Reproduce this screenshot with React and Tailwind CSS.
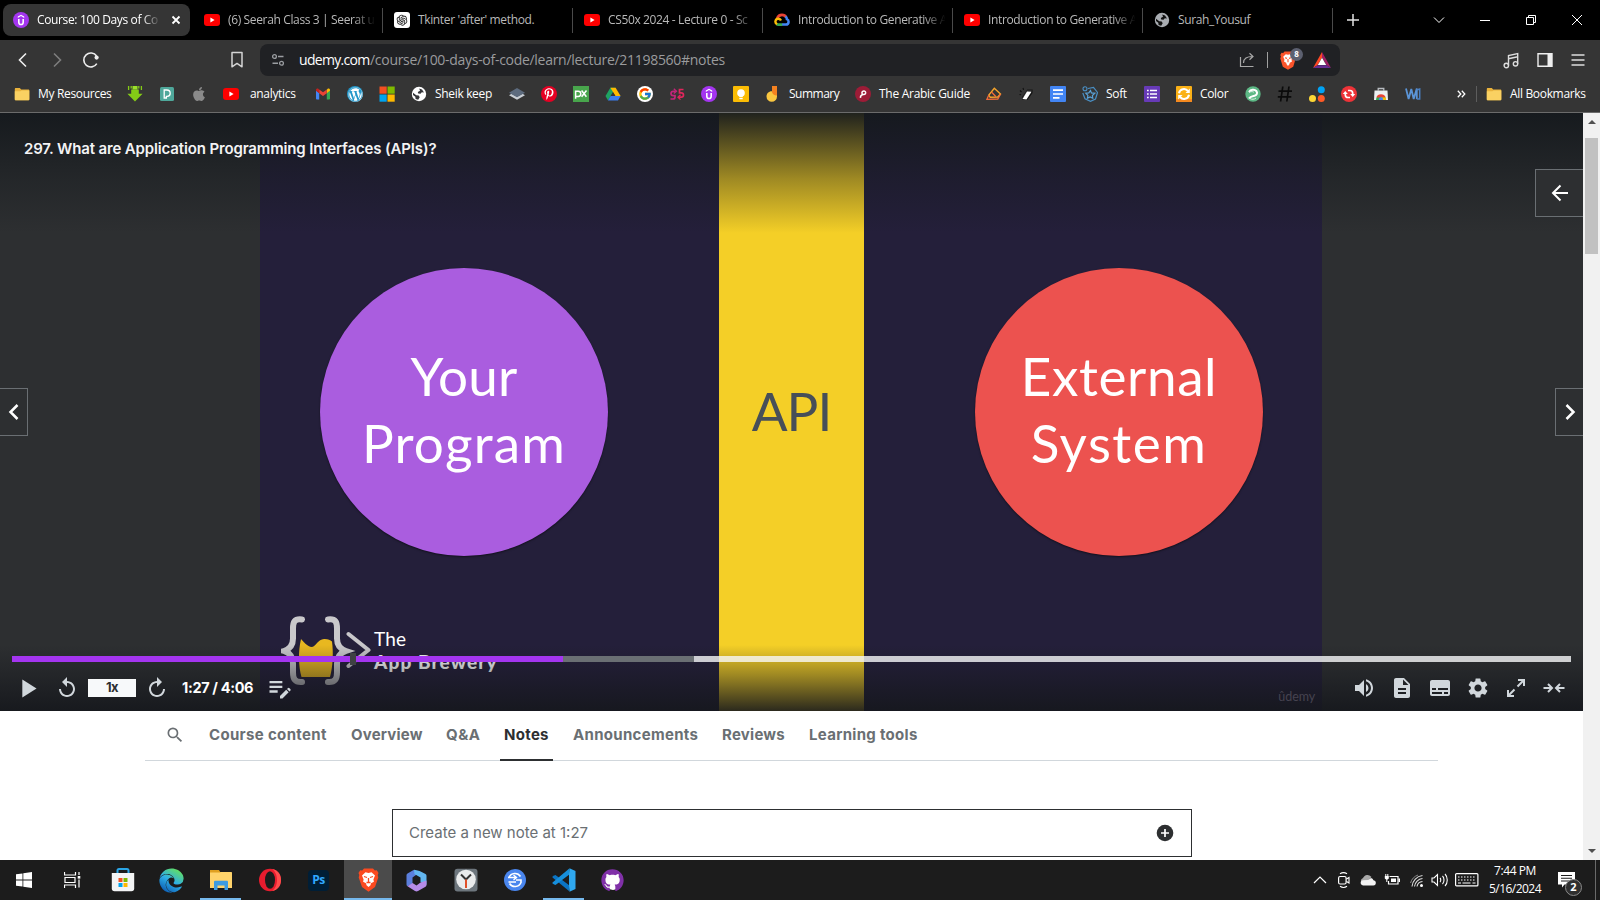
import React from "react";
import {
  MdReplay, MdPlayArrow, MdEditNote, MdVolumeUp, MdDescription, MdSubtitles, MdSettings, MdSearch,
} from "react-icons/md";
import { FaApple, FaWordpress, FaEdge, FaGithub, FaPinterestP } from "react-icons/fa";
import { FcGoogle } from "react-icons/fc";
import { AiOutlineOpenAI } from "react-icons/ai";

/* ---------- small brand marks (16px) ---------- */

const Svg = ({ s = 16, vb = "0 0 16 16", className = "", children }) => (
  <svg width={s} height={s} viewBox={vb} fill="none" className={"shrink-0 " + className}>{children}</svg>
);

const UdemyIcon = () => (
  <Svg>
    <circle cx="8" cy="8" r="8" fill="#a435f0" />
    <path d="M4.800 4.600 8 2.800l3.200 1.800v1.300L8 4.100 4.800 5.900Z" fill="#fff" />
    <path d="M5.800 7v3.200c0 1.400.9 2.300 2.200 2.300s2.200-.9 2.200-2.300V7" stroke="#fff" strokeWidth="1.600" />
  </Svg>
);
const YoutubeIcon = () => (
  <Svg>
    <rect x="0" y="2" width="16" height="12" rx="3" fill="#f00" />
    <path d="M6.400 5.500v5L10.600 8Z" fill="#fff" />
  </Svg>
);
const OpenAiIcon = () => (
  <span className="flex h-4 w-4 shrink-0 items-center justify-center rounded-[3px] bg-white">
    <AiOutlineOpenAI size={14} color="#222" />
  </span>
);
const CloudIcon = () => (
  <Svg>
    <path d="M3.200 6.200C4 4 5.800 2.800 8 2.800c1.900 0 3.300.8 4.100 2.300" stroke="#ea4335" strokeWidth="2.700" />
    <path d="M11.400 4.600c1 .7 1.500 1.700 1.500 2.600 1 .4 1.700 1.400 1.700 2.500 0 1.700-1.200 2.900-2.800 2.900H8" stroke="#4285f4" strokeWidth="2.500" />
    <path d="M8.200 12.600H4.400c-.8 0-1.400-.3-1.900-.7" stroke="#34a853" strokeWidth="2.600" />
    <path d="M3 12.200C1.700 11.400 1.200 10.300 1.500 9c.4-1.500 1.500-2.300 3-2.200 1.200.1 2 .7 2.500 1.700" stroke="#fbbc05" strokeWidth="2.400" />
  </Svg>
);
const GlobeIcon = ({ bg = "#fff", fg = "#35363a" }) => (
  <Svg>
    <circle cx="8" cy="8" r="7.200" fill={bg} />
    <path d="M8.200 2.500 11 3.600l2 2.900-2.200-.2-1.300 1.500-2.300-.3-.4-1.600L9 4.800Z" fill={fg} />
    <path d="M2 6.800l3.300 2.400 2.400.4 1 1.600-1.500 2.500L4.600 13l-.3-2.300L2 9Z" fill={fg} />
  </Svg>
);
const FolderIcon = () => (
  <Svg>
    <path d="M.8 3.200c0-.7.4-1.100 1-1.100h4l1.400 1.400h7c.7 0 1.100.4 1.100 1v8.700c0 .6-.4 1-1.100 1H1.800c-.6 0-1-.4-1-1Z" fill="#e9b23c" />
    <path d="M.8 5.300h5.600l1.200-.9h7.700v8.800c0 .6-.4 1-1.100 1H1.800c-.6 0-1-.4-1-1Z" fill="#fad162" />
  </Svg>
);
const DownIcon = () => (
  <Svg>
    <path d="M4.200 3.400h7.600v4.300H15.600L8 15.600.4 7.700h3.800Z" fill="#84cc16" />
    <path d="M1.600 0v4M14.400 0v4M4.200 0v2.500M11.800 0v2.500" stroke="#84cc16" strokeWidth="1.300" />
    <path d="M5.500 0h5v3.500h-5Z" fill="#9be02a" />
  </Svg>
);
const DIcon = () => (
  <Svg>
    <rect x="1" y="1" width="14" height="14" rx="1.500" fill="#4fa89b" />
    <path d="M5.200 12V4h2.600c2.100 0 3.400 1.200 3.400 3.200S9.900 10.300 8.200 10.300H7.400V12Z" stroke="#fff" strokeWidth="1.300" />
  </Svg>
);
const GmailIcon = () => (
  <Svg>
    <path d="M1 4.500v8.200c0 .5.400.8.8.8h2.400V7Z" fill="#4285f4" />
    <path d="M15 4.500v8.200c0 .5-.4.8-.8.8h-2.400V7Z" fill="#34a853" />
    <path d="M11.800 3.800V7.200L15 4.800V3.900c0-1.300-1.400-1.900-2.300-1.200Z" fill="#fbbc04" />
    <path d="M4.200 7.200V3.400L8 6.300l3.800-2.900v3.800L8 10.100Z" fill="#ea4335" />
    <path d="M1 3.900v.9l3.200 2.400V3.800l-.9-1.100C2.400 2 1 2.600 1 3.900Z" fill="#c5221f" />
  </Svg>
);
const WpIcon = () => (
  <span className="flex h-4 w-4 shrink-0 items-center justify-center rounded-full bg-[#2196c9]">
    <FaWordpress size={15} color="#fff" />
  </span>
);
const MsIcon = () => (
  <Svg>
    <path d="M.5.500h7.200v7.200H.5Z" fill="#f25022" />
    <path d="M8.500.5h7.200v7.200H8.500Z" fill="#7fba00" />
    <path d="M.5 8.500h7.200v7.200H.5Z" fill="#00a4ef" />
    <path d="M8.500 8.500h7.200v7.200H8.500Z" fill="#ffb900" />
  </Svg>
);
const StackIcon = () => (
  <Svg>
    <path d="M0 9.200 8 13.800l8-4.600-2.500-1.500L8 10.800 2.500 7.700Z" fill="#c9ced4" />
    <path d="M8 2 0 6.700l8 4.600 8-4.600Z" fill="#5d6b7e" />
  </Svg>
);
const PinIcon = () => (
  <span className="flex h-4 w-4 shrink-0 items-center justify-center rounded-full bg-[#e60023]">
    <FaPinterestP size={12} color="#fff" />
  </span>
);
const PxIcon = () => (
  <Svg>
    <path d="M0 0h16v16H0Z" fill="#48a54c" />
    <path d="M2.600 12.800V5.200h2.600a2.400 2.400 0 0 1 0 5.200H2.600M8.600 4.500l4.800 6.300M13.500 4.500 8.600 10.800" stroke="#fff" strokeWidth="1.500" />
  </Svg>
);
const DriveIcon = () => (
  <Svg>
    <path d="M5.400 1.700h5.200L5.700 10 3 14.400.5 10.100Z" fill="#1ea362" />
    <path d="M5.400 1.700h5.200l5 8.400h-5.200Z" fill="#ffba00" />
    <path d="M5.600 10.100h10L13 14.400H3Z" fill="#3b7ded" />
    <path d="M8 6.200 5.700 10.100h4.700Z" fill="#353535" />
  </Svg>
);
const GIcon = () => (
  <span className="flex h-4 w-4 shrink-0 items-center justify-center rounded-full bg-white">
    <FcGoogle size={14} />
  </span>
);
const SIcon = () => (
  <Svg>
    <path d="M6.500 5.300H4.200A2.300 2.300 0 0 0 2 7.500c0 1.300.9 2.200 2.200 2.200H6V11c0 1.300-.8 2-2 2H1.500" stroke="#c2257a" strokeWidth="1.700" />
    <path d="M4.800 2.800 7.500 5.300 4.800 7.600" stroke="#c2257a" strokeWidth="1.300" />
    <path d="M14.500 3.500h-4v3.400h1.700c1.400 0 2.300.8 2.300 2.100s-.9 2.200-2.300 2.200H9.500" stroke="#e0265c" strokeWidth="1.700" />
    <path d="M11.500 8.800 9 11.200l2.500 2.400" stroke="#e0265c" strokeWidth="1.300" />
  </Svg>
);
const KeepIcon = () => (
  <Svg>
    <rect width="16" height="16" rx="1" fill="#fbbc04" />
    <circle cx="8" cy="7" r="3.800" fill="#fff" />
    <path d="M6.300 9.500h3.400v1.700H6.300ZM6.300 12h3.400v1.300H6.300Z" fill="#fff" />
  </Svg>
);
const HandIcon = () => (
  <Svg>
    <path d="M1.500 10.500C1.500 7.500 3.800 5 7 5.200L12 5v5.500A5.200 5.200 0 0 1 1.500 10.500Z" fill="#fbc740" />
    <path d="M7 0h5v9.500c-2.500 0-5-1.500-5-4Z" fill="#f58220" />
  </Svg>
);
const ArabicIcon = () => (
  <Svg>
    <circle cx="8" cy="8" r="8" fill="#9d1c37" />
    <path d="M10.800 6.800C10.600 5.200 9 4.400 7.700 5.300c-1.200.9-1 2.700.3 3.200 1 .3 2-.2 3-1.200M8 8.500c-1.800.4-2.700 1.400-2.500 3.300" stroke="#fff" strokeWidth="1.500" />
  </Svg>
);
const DiamondIcon = () => (
  <Svg>
    <path d="M8.300 2.200 14.500 8l-2.700 3-7.600.3L2.800 9Z" stroke="#f7a52b" strokeWidth="1.400" />
    <path d="M2.800 9 .9 13.300l10.900-.3 2.700-5M5.500 6l4.500 4.800" stroke="#f26b3a" strokeWidth="1.300" />
  </Svg>
);
const EraserIcon = () => (
  <Svg>
    <path d="M9.500 3.500h5v3.500L9.500 14h-5v-3.500Z" fill="#111" />
    <path d="M9.500 3.500h5l-5 7.500h-5Z" fill="#2a2a2a" />
    <path d="m9 5.500 4.500.3-5 7.700-4-.5Z" fill="#fff" />
    <path d="M2 4.500 3.500 6M5 2l.6 1.800M1.500 8.500l1.600.3" stroke="#111" strokeWidth="1.100" />
  </Svg>
);
const DocsIcon = () => (
  <Svg>
    <rect width="16" height="16" rx="1" fill="#4285f4" />
    <path d="M3 4.200h10M3 8h10M3 11.800h6.500" stroke="#fff" strokeWidth="1.700" />
  </Svg>
);
const SoftIcon = () => (
  <Svg>
    <circle cx="3" cy="2.800" r="2" stroke="#4a8fc4" strokeWidth="1.100" />
    <path d="M6 2.500 11.500 1.500l4 5-2 6.500-5 2.300-5.500-2.500L.8 7" stroke="#4a8fc4" strokeWidth="1.200" />
    <path d="m8.500 4.500.9 2.400 3.400.4-2.400 2.200.4 2.800-2.700-1.300-2.700 1.300.5-2.900L3.800 7.200l3-.3Z" stroke="#5aa2d8" strokeWidth="1.200" />
  </Svg>
);
const FormsIcon = () => (
  <Svg>
    <rect width="16" height="16" rx="1" fill="#673ab7" />
    <path d="M6 4.500h7M6 8h7M6 11.500h7" stroke="#fff" strokeWidth="1.600" />
    <path d="M3 4.500h1.700M3 8h1.700M3 11.500h1.700" stroke="#fff" strokeWidth="1.600" />
  </Svg>
);
const ColorIcon = () => (
  <Svg>
    <rect width="16" height="16" rx="1" fill="#fbb117" />
    <path d="M0 13h16v3H0Z" fill="#f58a1f" />
    <path d="M3 7.200a5 5 0 0 1 9-2M13 8.800a5 5 0 0 1-9 2" stroke="#fff" strokeWidth="2" />
    <path d="M13.800 2.500V7H9.500ZM2.200 13.500V9h4.300Z" fill="#fff" />
  </Svg>
);
const GreenIcon = () => (
  <Svg>
    <circle cx="8" cy="8" r="7.700" fill="#5db885" />
    <path d="M4 6c1.500-2.500 5.500-3 7.300-1 1.600 1.900.5 4.200-1.700 4.700-2 .5-4.300.5-5.600 2.800" stroke="#fff" strokeWidth="2" />
    <path d="M4 6.500c2-1.400 4.500-1 5 0M5 12.500c1.500 1.200 4.500 1 6-.5" stroke="#d9f0e2" strokeWidth="1" />
  </Svg>
);
const HashIcon = () => (
  <Svg>
    <path d="M5.800.5 3.600 15.500M12 .5 9.800 15.500M1.500 5.200h13.500M.8 10.800h13.500" stroke="#0b0b0b" strokeWidth="1.700" />
  </Svg>
);
const DotsIcon = () => (
  <Svg>
    <circle cx="12.300" cy="3.700" r="3.500" fill="#00a3f5" />
    <circle cx="3.500" cy="12.500" r="3.500" fill="#fdd835" />
    <circle cx="12.300" cy="12.500" r="3.500" fill="#ff5a26" />
  </Svg>
);
const RedIcon = () => (
  <Svg>
    <circle cx="8" cy="8" r="8" fill="#ee3338" />
    <path d="M7 4.500h2c1.700 0 2.700 1 2.700 2.700v1.500M9 11.500H7c-1.700 0-2.700-1-2.700-2.700V7.300" stroke="#fff" strokeWidth="1.700" />
    <path d="M9.200 8h5l-2.500 3ZM6.800 8h-5l2.500-3Z" fill="#fff" />
  </Svg>
);
const StoreIcon = () => (
  <Svg>
    <path d="M5.200 4.500v-2h5.600v2" stroke="#b8bcc0" strokeWidth="1.300" />
    <path d="M1.500 4.500h13l.5 9.500H1Z" fill="#eceff1" />
    <path d="M3 14a5 5 0 0 1 10 0Z" fill="#34a853" />
    <path d="M3.300 11.500A5 5 0 0 1 12.700 11.500H8Z" fill="#ea4335" />
    <path d="M8 11.500h4.700c.2.700.3 1.600.3 2.500H9Z" fill="#fbbc05" />
    <circle cx="8" cy="13.300" r="2" fill="#4285f4" />
    <path d="M1 14h14v2H1Z" fill="#353535" />
  </Svg>
);
const WaIcon = () => (
  <Svg>
    <path d="m1 2.500 2.600 10.500L6.300 3l2.400 10L11.800 2.500V13" stroke="#5b94d6" strokeWidth="1.800" strokeLinejoin="bevel" />
    <path d="M11.500 4 14.700 3v10h-3" stroke="#4a7fc0" strokeWidth="1.500" />
  </Svg>
);

/* ---------- browser chrome ---------- */

const tabs = [
  { t: "(6) Seerah Class 3 | Seerat u", i: <YoutubeIcon />, f: true },
  { t: "Tkinter 'after' method.", i: <OpenAiIcon /> },
  { t: "CS50x 2024 - Lecture 0 - Sc", i: <YoutubeIcon />, f: true },
  { t: "Introduction to Generative A", i: <CloudIcon />, f: true },
  { t: "Introduction to Generative A", i: <YoutubeIcon />, f: true },
  { t: "Surah_Yousuf", i: <GlobeIcon bg="#a9adb2" fg="#111" /> },
];

const fade = "[mask-image:linear-gradient(to_right,#000_84%,transparent_99%)]";

function TabStrip() {
  return (
    <div className="flex h-10 bg-black text-[12px] tracking-[-0.36px]">
      <div className="mt-1 ml-[3px] flex h-8 w-[187px] items-center rounded-lg bg-[#353535] pl-[10px]">
        <UdemyIcon />
        <span className={"ml-2 w-[125px] whitespace-nowrap text-white " + fade}>Course: 100 Days of Co</span>
        <svg width="10" height="10" viewBox="0 0 10 10" className="ml-[9px]"><path d="m1.500 1.500 7 7M8.500 1.500l-7 7" stroke="#fff" strokeWidth="1.800" /></svg>
      </div>
      <div className="ml-[3px] flex">
        {tabs.map((tab, k) => (
          <div key={k} className="flex w-[190px] items-center pl-[11px]">
            {tab.i}
            <span className={"ml-2 w-[149px] whitespace-nowrap text-[#b9b9b9] " + (tab.f ? fade : "")}>{tab.t}</span>
            <span className="ml-auto h-[25px] w-px bg-[#4a4a4a]" />
          </div>
        ))}
      </div>
      <svg width="12" height="12" viewBox="0 0 12 12" className="mt-[14px] ml-[14px]"><path d="M6 0v12M0 6h12" stroke="#e4e4e4" strokeWidth="1.500" /></svg>
      <div className="mt-[14px] ml-auto flex pr-[17px]">
        <svg width="12" height="12" viewBox="0 0 12 12" fill="none" className="mr-[34px]"><path d="m1 3.500 5 5 5-5" stroke="#fff" /></svg>
        <svg width="12" height="12" viewBox="0 0 12 12" className="mr-[34px]"><path d="M1 6.500h10" stroke="#fff" /></svg>
        <svg width="12" height="12" viewBox="0 0 12 12" fill="none" className="mr-[34px]"><path d="M1.500 3.500h7v7h-7ZM3.500 3.500v-2h7v7h-2" stroke="#fff" /></svg>
        <svg width="12" height="12" viewBox="0 0 12 12"><path d="m1 1 10 10M11 1 1 11" stroke="#fff" /></svg>
      </div>
    </div>
  );
}

function Toolbar() {
  return (
    <div className="flex h-10 items-center">
      <Svg s={18} vb="0 0 18 18" className="ml-[14px]"><path d="m12 2.500-6.500 6.500 6.500 6.500" stroke="#eee" strokeWidth="1.600" /></Svg>
      <Svg s={18} vb="0 0 18 18" className="ml-4"><path d="m6 2.500 6.500 6.500L6 15.500" stroke="#7d7d7d" strokeWidth="1.600" /></Svg>
      <Svg s={18} vb="0 0 18 18" className="ml-4"><path d="M14.800 12.600A7 7 0 1 1 14.600 5" stroke="#eee" strokeWidth="1.600" /><circle cx="14.600" cy="6.600" r="2.100" fill="#eee" /></Svg>
      <Svg s={18} vb="0 0 18 18" className="ml-[128px]"><path d="M4 1.500h10v14.300l-5-3.400-5 3.400Z" stroke="#d5d5d5" strokeWidth="1.500" strokeLinejoin="round" /></Svg>
      <div className="ml-[14px] flex h-8 w-[1080px] items-center rounded-lg bg-[#202124] pl-[11px]">
        <Svg s={14} vb="0 0 14 14"><circle cx="3.500" cy="3.500" r="1.900" stroke="#9a9da1" strokeWidth="1.300" /><circle cx="10.500" cy="10.300" r="1.900" stroke="#9a9da1" strokeWidth="1.300" /><path d="M7 3.500h5.500M1.500 10.300H7" stroke="#9a9da1" strokeWidth="1.400" /></Svg>
        <div className="ml-[14px] flex pb-px text-[14px] whitespace-nowrap">
          <span className="w-[71px] tracking-[-0.69px] text-white">udemy.com</span>
          <span className="tracking-[-0.29px] text-[#9a9b9d]">/course/100-days-of-code/learn/lecture/21198560#notes</span>
        </div>
        <div className="ml-auto flex items-center pr-[9px]">
          <Svg s={16}><path d="M1.500 5v9.500h13M4.500 11C4.500 6.500 8 4.500 13.500 4.500M10.500 1.200 14 4.500l-3.500 3.300" stroke="#a8a8a8" strokeWidth="1.200" /></Svg>
          <span className="ml-3 h-4 w-px bg-[#a0a0a0]" />
          <div className="relative ml-3 flex">
            <svg width="16" height="19" viewBox="0 0 16 19">
              <path d="M4.500.5h7l1.300 1.400 1.700-.1L15.700 4l-.6 1.500.6 2-2.500 8.300L8 18.800l-5.200-3L.3 7.500l.6-2L.3 4l1.200-2.200 1.700.1Z" fill="#fb542b" />
              <path d="m8 3.800 2.200-.6 2.600 2.500-1.300 3 .5 1.800-2.200 1.200-.4 1.500L8 15l-1.400-1.800-.4-1.500L4 10.500l.5-1.800-1.300-3 2.600-2.500Z" fill="#fff" />
              <path d="m5 6.800 2 .6M11 6.800l-2 .6M8 8v3.200" stroke="#fb542b" strokeWidth="1.100" />
            </svg>
            <span className="absolute top-[-3px] left-[10px] flex h-[13px] w-[13px] items-center justify-center rounded-full bg-[#5c6070] text-[8px] font-bold text-white">8</span>
          </div>
          <svg width="18" height="16" viewBox="0 0 18 16" className="ml-[17px]">
            <path d="M9 0 0 16 4.500 13.300 9 5.500Z" fill="#ff4724" /><path d="m9 0 9 16-4.500-2.700L9 5.500Z" fill="#9e1f63" /><path d="M0 16h18l-4.500-2.700h-9Z" fill="#662d91" /><path d="m9 5.800 4.200 7.300H4.800Z" fill="#fff" />
          </svg>
        </div>
      </div>
      <div className="ml-auto flex items-center pr-[15px]">
        <Svg s={17} vb="0 0 17 17" className="mr-[17px]"><circle cx="3.300" cy="13.500" r="2.200" stroke="#ddd" strokeWidth="1.400" /><circle cx="12.500" cy="11.800" r="2.200" stroke="#ddd" strokeWidth="1.400" /><path d="M5.500 13.500V3.500L14.700 1.500v10.300M5.500 6.800l9.200-2" stroke="#ddd" strokeWidth="1.400" /></Svg>
        <Svg s={16} className="mr-[18px]"><path d="M1 1.700h14v12.600H1Z" stroke="#eee" strokeWidth="1.400" /><path d="M10.500 1.500H15v13h-4.500Z" fill="#eee" /></Svg>
        <Svg s={14} vb="0 0 14 14"><path d="M.5 2h13M.5 7h13M.5 12h13" stroke="#ddd" strokeWidth="1.300" /></Svg>
      </div>
    </div>
  );
}

const Lbl = ({ className, children }) => (
  <span className={"whitespace-nowrap text-white " + className}>{children}</span>
);

function Bookmarks() {
  return (
    <div className="flex h-8 items-center gap-4 pb-1 pl-[14px] text-[12px] tracking-[-0.33px]">
      <div className="flex items-center"><FolderIcon /><Lbl className="ml-2 w-[73px]">My Resources</Lbl></div>
      <DownIcon />
      <DIcon />
      <FaApple size={16} color="#8a8a8a" className="shrink-0" />
      <div className="flex items-center"><YoutubeIcon /><Lbl className="ml-[11px] w-[49px]">analytics</Lbl></div>
      <GmailIcon />
      <WpIcon />
      <MsIcon />
      <div className="flex items-center"><GlobeIcon /><Lbl className="ml-2 w-[58px]">Sheik keep</Lbl></div>
      <StackIcon />
      <PinIcon />
      <PxIcon />
      <DriveIcon />
      <GIcon />
      <SIcon />
      <UdemyIcon />
      <KeepIcon />
      <div className="flex items-center"><HandIcon /><Lbl className="ml-2 w-[50px] tracking-[-0.5px]">Summary</Lbl></div>
      <div className="flex items-center"><ArabicIcon /><Lbl className="ml-2 w-[91px] tracking-[-0.28px]">The Arabic Guide</Lbl></div>
      <DiamondIcon />
      <EraserIcon />
      <DocsIcon />
      <div className="flex items-center"><SoftIcon /><Lbl className="ml-2 w-[22px]">Soft</Lbl></div>
      <FormsIcon />
      <div className="flex items-center"><ColorIcon /><Lbl className="ml-2 w-[29px]">Color</Lbl></div>
      <GreenIcon />
      <HashIcon />
      <DotsIcon />
      <RedIcon />
      <StoreIcon />
      <WaIcon />
      <div className="ml-auto flex items-center pr-[15px]">
        <svg width="9" height="8" viewBox="0 0 9 8" fill="none"><path d="m.8.8 3 3.200-3 3.200M4.800.8l3 3.200-3 3.200" stroke="#fff" strokeWidth="1.300" /></svg>
        <span className="mr-[9px] ml-[10px] h-4 w-px bg-[#5d5d5d]" />
        <FolderIcon />
        <Lbl className="ml-2 w-[75px]">All Bookmarks</Lbl>
      </div>
    </div>
  );
}

/* ---------- lecture video ---------- */

function BreweryLogo() {
  return (
    <div className="absolute top-[503px] left-[21px] flex text-white">
      <svg width="90" height="70" viewBox="0 0 90 70" fill="none">
        <path d="M20 23c3 3 6 7.500 11 8 4-1 6-7.500 12-8 4-.2 6 1 8 2.500 1.500 11 1 25-2 35.500H20.500C17.500 50 17 36 20 23Z" fill="#e8b820" />
        <path d="M21 3.500c-8-1-9 3-9 9v10c0 7-3 10.500-9 12.500 6 2 9 5.500 9 12.500v9c0 6 1.500 10 9 9.500" stroke="#c9c8cb" strokeWidth="6" strokeLinecap="round" />
        <path d="M47 3.500c8-1 9 3 9 9v10c0 7 3 10.500 9 12.500-6 2-9 5.500-9 12.500v9c0 6-1.500 10-9 9.500" stroke="#c9c8cb" strokeWidth="6" strokeLinecap="round" />
        <path d="m67.500 18 20 16-20 16" stroke="#c9c8cb" strokeWidth="4" strokeLinecap="round" strokeLinejoin="round" />
      </svg>
      <div className="ml-[3px] flex flex-col pt-[11px] font-['Lato',sans-serif] leading-[23px]">
        <span className="text-[19px] tracking-[0.2px]">The</span>
        <span className="text-[19px] font-black tracking-[1.1px] whitespace-nowrap">App Brewery</span>
      </div>
    </div>
  );
}

const circle = "flex h-[288px] w-[288px] flex-col items-center justify-center rounded-full pb-[7px] text-center text-[53px] leading-[67px] text-white shadow-[0_1px_2px_rgba(0,0,0,0.5)]";

function Slide() {
  return (
    <div className="mx-[260px] flex h-full w-[1062px] bg-[#241f3a] font-['Lato',sans-serif]">
      <div className="relative w-[459px] pt-[155px] pl-[60px]">
        <div className={circle + " bg-[#aa5ddf]"}>
          <span className="tracking-[0.2px]">Your</span>
          <span className="tracking-[1.200px]">Program</span>
        </div>
        <BreweryLogo />
      </div>
      <div className="flex w-[145px] items-center justify-center bg-[#f4cf27] pb-[4px] text-[53px] leading-[67px] tracking-[-1px] text-[#474f58]">API</div>
      <div className="pt-[155px] pl-[111px]">
        <div className={circle + " bg-[#ec524f]"}>
          <span className="tracking-[0.6px]">External</span>
          <span className="tracking-[1.500px]">System</span>
        </div>
      </div>
    </div>
  );
}

function Controls() {
  return (
    <div className="absolute inset-x-0 bottom-0 h-[55px] text-[#d1d7dc]">
      <div className="relative mx-3 flex h-[6px]">
        <span className="w-[551px] bg-[#a435f0]" />
        <span className="w-[131px] bg-[#6a6f73]" />
        <span className="flex-1 bg-[#f7f9fa]/80" />
        <span className="absolute top-[-3px] left-[338px] h-3 w-[6px] bg-[#3e4143]" />
      </div>
      <div className="flex h-[52px] items-center">
        <MdPlayArrow size={31} className="ml-[12px]" />
        <MdReplay size={24} className="ml-[12px]" />
        <span className="ml-[9px] flex h-[18px] w-12 items-center justify-center bg-[#f7f9fa] text-[13px] font-bold tracking-[-0.6px] text-[#2d2f31]">1x</span>
        <MdReplay size={24} className="ml-[9px] -scale-x-100" />
        <span className="ml-[13px] w-[74px] text-[14.5px] font-bold tracking-[-0.35px] whitespace-nowrap text-white">1:27 / 4:06</span>
        <MdEditNote size={28} className="ml-[10px]" />
        <div className="ml-auto flex gap-[14px] pr-[17px]">
          <MdVolumeUp size={24} />
          <MdDescription size={24} />
          <MdSubtitles size={24} />
          <MdSettings size={24} />
          <Svg s={24} vb="0 0 24 24"><path d="M14 4h6v6M20 4l-6.500 6.500M10 20H4v-6M4 20l6.500-6.500" stroke="#d1d7dc" strokeWidth="2" /></Svg>
          <Svg s={24} vb="0 0 24 24"><path d="M1.500 12h8M6 8l4 4-4 4M22.500 12h-8M18 8l-4 4 4 4" stroke="#d1d7dc" strokeWidth="2" /></Svg>
        </div>
      </div>
    </div>
  );
}

function Video() {
  return (
    <div className="relative h-[598px] bg-[#2d2f31] font-['Inter',sans-serif]">
      <Slide />
      <div className="absolute inset-x-0 top-0 h-[120px] bg-linear-to-b from-[#15191d]/95 via-[#15191d]/38 via-55% to-transparent" />
      <div className="absolute inset-x-0 bottom-0 h-[66px] bg-linear-to-t from-[#15171c]/90 via-[#15171c]/38 via-55% to-transparent" />
      <span className="absolute right-[268px] bottom-[4px] font-['Lato',sans-serif] text-[12.5px] tracking-[-0.1px] text-[#464350]">ûdemy</span>
      <h1 className="absolute top-[25px] left-6 text-[15px] leading-[22px] font-semibold tracking-[-0.14px] whitespace-nowrap text-[#f3f3f4]">297. What are Application Programming Interfaces (APIs)?</h1>
      <div className="absolute top-[56px] right-0 flex h-12 w-12 items-center justify-center border border-r-0 border-[#6a6f73] bg-[#2d2f31]">
        <Svg s={18} vb="0 0 18 18"><path d="M17 9H2M9.500 1.500 2 9l7.500 7.500" stroke="#fff" strokeWidth="2" /></Svg>
      </div>
      <div className="absolute top-[275px] left-0 flex h-12 w-7 items-center justify-center border border-l-0 border-[#6a6f73] bg-[#2d2f31]">
        <Svg s={16}><path d="m11.500 1-7 7 7 7" stroke="#fff" strokeWidth="2.500" /></Svg>
      </div>
      <div className="absolute top-[275px] right-0 flex h-12 w-7 items-center justify-center border border-r-0 border-[#6a6f73] bg-[#2d2f31]">
        <Svg s={16}><path d="m4.500 1 7 7-7 7" stroke="#fff" strokeWidth="2.500" /></Svg>
      </div>
      <Controls />
    </div>
  );
}

/* ---------- course tabs and notes ---------- */

const tabText = "text-[15px] font-bold whitespace-nowrap text-[#6a6f73] ";

function NotesArea() {
  return (
    <div className="flex flex-1 flex-col bg-white pl-[145px] font-['Inter',sans-serif]">
      <div className="flex h-[50px] w-[1293px] border-b border-[#d1d7dc] leading-[47px]">
        <MdSearch size={20} color="#6a6f73" className="mt-[14px] ml-[20px]" />
        <span className={tabText + "ml-[24px] w-[117px] tracking-[0.33px]"}>Course content</span>
        <span className={tabText + "ml-[25px] w-[71px] tracking-[0.2px]"}>Overview</span>
        <span className={tabText + "ml-[24px] w-[35px] tracking-[0.5px]"}>Q&amp;A</span>
        <span className="ml-[19px] h-[50px] w-[53px] border-b-2 border-[#2d2f31] pl-1 text-[15px] font-bold tracking-[0.3px] text-[#2d2f31]">Notes</span>
        <span className={tabText + "ml-[20px] w-[125px] tracking-[0.3px]"}>Announcements</span>
        <span className={tabText + "ml-[24px] w-[64px] tracking-[0.25px]"}>Reviews</span>
        <span className={tabText + "ml-[23px] tracking-[0.3px]"}>Learning tools</span>
      </div>
      <div className="mt-[48px] ml-[247px] flex h-12 w-[800px] items-center justify-between border border-[#2d2f31] pr-[17px] pl-[16px]">
        <span className="text-[15px] text-[#6a6f73]">Create a new note at 1:27</span>
        <Svg s={18} vb="0 0 18 18"><circle cx="9" cy="9" r="8.300" fill="#2d2f31" /><path d="M9 5v8M5 9h8" stroke="#fff" strokeWidth="1.700" /></Svg>
      </div>
    </div>
  );
}

function Scrollbar() {
  return (
    <div className="flex w-[17px] flex-col items-center bg-[#f1f1f1]">
      <svg width="8" height="4" viewBox="0 0 8 4" className="mt-[7px]"><path d="M4 0 8 4H0Z" fill="#505050" /></svg>
      <span className="mt-[14px] h-[116px] w-[13px] bg-[#c1c1c1]" />
      <svg width="8" height="4" viewBox="0 0 8 4" className="mt-auto mb-[7px]"><path d="M0 0h8L4 4Z" fill="#505050" /></svg>
    </div>
  );
}

/* ---------- desktop taskbar ---------- */

const apps = [
  { k: "store", i: (
    <svg width="24" height="24" viewBox="0 0 24 24"><path d="M6.500 6V2.500c0-1 .5-1.500 1.500-1.500h8c1 0 1.500.5 1.500 1.500V6" fill="none" stroke="#2aa5e6" strokeWidth="2" /><path d="M.8 5h22.400v15.500c0 1.700-1 2.700-2.700 2.700h-17c-1.700 0-2.700-1-2.700-2.700Z" fill="#f3f4f5" /><path d="M7.500 10h4v4h-4Z" fill="#f25022" /><path d="M12.500 10h4v4h-4Z" fill="#7fba00" /><path d="M7.500 15h4v4h-4Z" fill="#00a4ef" /><path d="M12.500 15h4v4h-4Z" fill="#ffb900" /></svg>) },
  { k: "edge", i: (
    <span className="flex">
      <svg width="0" height="0"><defs><linearGradient id="edgeFill" x1="0.3" y1="1" x2="0.8" y2="0.1"><stop offset="0" stopColor="#0d5fb5" /><stop offset=".5" stopColor="#2eaee6" /><stop offset="1" stopColor="#5fdc6a" /></linearGradient></defs></svg>
      <FaEdge size={25} fill="url(#edgeFill)" stroke="none" />
    </span>) },
  { k: "files", on: true, i: (
    <svg width="24" height="22" viewBox="0 0 24 22"><path d="M1 3h21c.6 0 1 .4 1 1v15H1Z" fill="#ffd36b" /><path d="M5 21v-8c0-.8.500-1.300 1.300-1.300h11.400c.8 0 1.300.5 1.300 1.300v8h-3.500v-4.500h-7V21Z" fill="#3d9be0" /><path d="M1 1h9l1.500 2.500H1Z" fill="#e0a020" /></svg>) },
  { k: "opera", i: (
    <svg width="24" height="24" viewBox="0 0 24 24"><ellipse cx="12" cy="12" rx="11" ry="11.300" fill="#e81c2e" /><path d="M14 1c6 1 9 5.500 9 11s-3 10-9 11c3-2 5-6 5-11s-2-9-5-11Z" fill="#ff4d4d" /><ellipse cx="12" cy="12" rx="5" ry="8.700" fill="#1c1c1c" /></svg>) },
  { k: "ps", i: (
    <span className="flex h-[21px] w-[21px] items-center justify-center rounded-[4px] bg-[#001e36] text-[12px] font-bold tracking-[-0.5px] text-[#31a8ff]">Ps</span>) },
  { k: "brave", on: true, active: true, i: (
    <svg width="21" height="24" viewBox="0 0 21 24"><path d="M6 .5h9L16.800 2.500l2-.2L20.500 5l-.8 2 .6 2.500L17 19l-6.500 4.700L4 19 .7 9.500 1.300 7 .5 5l1.700-2.700 2 .2Z" fill="#fb4a20" /><path d="m10.500 5 3-.8L17 7.500l-1.600 4 .5 2.200-2.900 1.500-.5 2L10.500 19l-2-1.800-.5-2-2.900-1.500.5-2.200L4 7.500l3.500-3.300Z" fill="#fff" /><path d="m6 8.500 3 1M15 8.500l-3 1M10.500 10v4.500M8.500 14.500h4" stroke="#fb4a20" strokeWidth="1.300" fill="none" /></svg>) },
  { k: "m365", i: (
    <svg width="21" height="23" viewBox="0 0 21 23"><path d="M8 .8 1.500 4.500C.8 5 .5 5.500.5 6.300v9c0 1 .4 1.500 1 1.900L6.500 15V8.500L12 4.500Z" fill="#5b7fdc" /><path d="M8 .8c3 0 8 2.200 11.500 4.200.7.400 1 1 1 1.700v9L14.500 13V8.500L8.500 5Z" fill="#62b6f0" /><path d="M1.500 17.200 6.500 14l4 2.500 4-3 6-2v4.500c0 .8-.4 1.300-1 1.700l-7.500 4.400c-1 .5-2 .5-3 0Z" fill="#b58be8" /></svg>) },
  { k: "clock", i: (
    <svg width="24" height="24" viewBox="0 0 24 24"><rect x=".5" y=".8" width="23" height="22.700" rx="3" fill="#6d767d" /><circle cx="12" cy="11.500" r="9.800" fill="#e9ebec" /><path d="M7 6.500 12 11.500M17 6.500 12 11.500" stroke="#333" strokeWidth="2" /><path d="M12 11.500v8.500" stroke="#e0502a" strokeWidth="2" /></svg>) },
  { k: "g", i: (
    <svg width="22" height="22" viewBox="0 0 22 22" fill="none"><circle cx="11" cy="11" r="11" fill="#4a86ee" /><path d="M16.500 7.500A6.500 6.500 0 0 0 5 8.500M5.500 14.500A6.500 6.500 0 0 0 17 13.500V11h-5" stroke="#fff" strokeWidth="1.600" /><path d="M4 8.500h8M9.500 6l3 2.500-3 2.500M4.500 13h7.500" stroke="#fff" strokeWidth="1.400" /></svg>) },
  { k: "code", on: true, i: (
    <svg width="24" height="24" viewBox="0 0 24 24"><path d="M2.200 7.500.5 8.400v1L17 23l.5-5.500L3.500 7Z" fill="#0b74c4" /><path d="M2.200 16.500.5 15.600v-1L17.300.5v6L3.500 17Z" fill="#168fdc" /><path d="M17.500.3 23.500 3v18l-6 2.700L17 18V6Z" fill="#2fa8f0" /></svg>) },
  { k: "github", i: (
    <span className="flex h-[20px] w-[20px] items-center justify-center rounded-full bg-white"><FaGithub size={23} color="#8030a8" className="shrink-0" /></span>) },
];

function Taskbar() {
  return (
    <div className="flex h-10 items-center bg-[#1c1c1c]">
      <div className="flex w-12 justify-center"><svg width="16" height="16" viewBox="0 0 16 16"><path d="M0 2.300 6.500 1.400v6.200H0ZM7.300 1.300 16 0v7.600H7.300ZM0 8.400h6.500v6.200L0 13.700ZM7.300 8.400H16V16l-8.700-1.300Z" fill="#fff" /></svg></div>
      <div className="flex w-[50px] justify-center pr-[2px] pb-px"><svg width="17" height="16" viewBox="0 0 17 16" fill="none"><path d="M.5 0v3h11V0M.5 16v-3h11v3M1 5.500h10v5H1ZM15 0v3M15 7.500v8" stroke="#fff" strokeWidth="1.200" /><path d="M13.700 4h2.600v2.600h-2.600Z" fill="#fff" /></svg></div>
      {apps.map((a) => (
        <div key={a.k} className={"relative flex h-10 items-center justify-center " + (a.active ? "ml-px w-[48px] bg-[#4b4b4b]" : "w-[49px]")}>
          {a.i}
          {a.on && <span className={"absolute bottom-0 h-[2px] bg-[#76b9ed] " + (a.active ? "inset-x-0" : "inset-x-[4px]")} />}
        </div>
      ))}
      <div className="ml-auto flex h-10 items-center text-white">
        <svg width="14" height="8" viewBox="0 0 14 8" fill="none"><path d="m1 7 6-6 6 6" stroke="#fff" strokeWidth="1.200" /></svg>
        <svg width="12" height="16" viewBox="0 0 12 16" fill="none" className="ml-[11px]"><rect x=".6" y="4.500" width="7.500" height="7.500" rx="1.500" stroke="#fff" strokeWidth="1.200" /><path d="m8.500 7 2.500-1.500v5.500L8.500 9.500M2 1.800C4 .5 7 .5 9 1.800M2 14.300c2 1.300 5 1.300 7 0" stroke="#fff" strokeWidth="1.100" /></svg>
        <svg width="17" height="12" viewBox="0 0 17 12" className="ml-[9px]"><path d="M4 10.500A3.500 3.500 0 0 1 4 4 5 5 0 0 1 12.500 3l-5 5Z" fill="#a8a8a8" /><path d="M3 11a2.500 2.500 0 0 1 1-4.700L9 6l3-2a4 4 0 0 1 2.500 2.300A2.600 2.600 0 0 1 14 11.500H4Z" fill="#f2f2f2" /></svg>
        <svg width="16" height="12" viewBox="0 0 16 12" fill="none" className="ml-[8px]"><path d="M5.500 2.500h8.500v7.500H4.500V7" stroke="#fff" strokeWidth="1.200" /><path d="M14.500 4.500H16v3.500h-1.500ZM7 4.500h5v3.500H7ZM.8 2h4v2.500l-1.200 1H2L.8 4.500Z" fill="#fff" /><path d="M1.800 0v2M3.800 0v2M2.800 5v3" stroke="#fff" /></svg>
        <svg width="13" height="13" viewBox="0 0 13 13" fill="none" className="ml-[10px]"><path d="M2 12.500A12 12 0 0 1 12.500 1.500M4.500 12.500a9 9 0 0 1 8-8M7 12.500a6 6 0 0 1 5.500-5" stroke="#ddd" strokeWidth="1.100" /><path d="M.5 9A12 12 0 0 1 8 1" stroke="#888" strokeWidth="1" /><circle cx="11.500" cy="11.500" r="1.500" fill="#fff" /></svg>
        <svg width="17" height="14" viewBox="0 0 17 14" fill="none" className="ml-[8px]"><path d="M1 5h2l3.500-3.500v11L3 9H1ZM9 5c1 1 1 3 0 4M11.500 3c2 2 2 6 0 8M14 1c3 3 3 9 0 12" stroke="#fff" strokeWidth="1.100" /></svg>
        <svg width="24" height="14" viewBox="0 0 24 14" fill="none" className="ml-[7px]"><rect x=".6" y=".6" width="22.300" height="12.300" rx="1" stroke="#fff" strokeWidth="1.200" /><path d="M3 4h18M3 7h18" stroke="#fff" strokeDasharray="1.500 1.500" /><path d="M3 10h3M7.500 10h8M17.500 10h3" stroke="#fff" /></svg>
        <div className="ml-[8px] flex w-[56px] flex-col items-center text-[12px] leading-[18px]">
          <span className="tracking-[-0.41px]">7:44 PM</span>
          <span className="tracking-[-0.54px]">5/16/2024</span>
        </div>
        <div className="relative ml-[15px] w-[37px]">
          <svg width="17" height="16" viewBox="0 0 17 16"><path d="M0 0h17v12.500H6.500L4 15.500v-3H0Z" fill="#fff" /><path d="M3 3.500h11M3 6.200h11M3 9h8" stroke="#1c1c1c" strokeWidth="1.100" /></svg>
          <span className="absolute top-[7px] left-[7px] flex h-[17px] w-[17px] items-center justify-center rounded-full border border-[#8a8a8a] bg-[#2f2f2f] text-[11px] font-bold">2</span>
        </div>
        <span className="mr-[4px] h-10 w-px bg-[#6a6a6a]" />
      </div>
    </div>
  );
}

export default function App() {
  return (
    <div className="flex h-[900px] w-[1600px] flex-col overflow-hidden bg-[#353535] font-['Open_Sans','Noto_Sans',sans-serif]">
      <TabStrip />
      <Toolbar />
      <Bookmarks />
      <div className="h-px bg-[#6b6b6b]" />
      <div className="flex h-[747px]">
        <div className="flex w-[1583px] flex-col">
          <Video />
          <NotesArea />
        </div>
        <Scrollbar />
      </div>
      <Taskbar />
    </div>
  );
}
